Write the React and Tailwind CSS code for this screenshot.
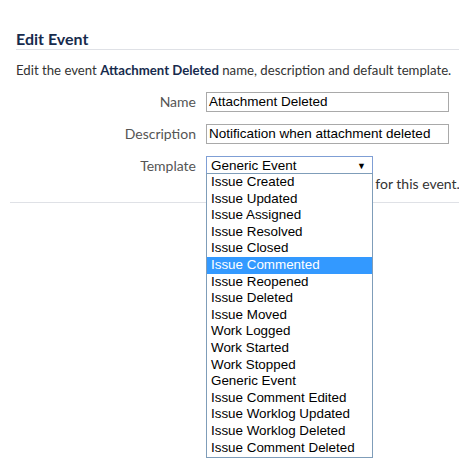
import React from "react";

const items = [
  "Issue Created",
  "Issue Updated",
  "Issue Assigned",
  "Issue Resolved",
  "Issue Closed",
  "Issue Commented",
  "Issue Reopened",
  "Issue Deleted",
  "Issue Moved",
  "Work Logged",
  "Work Started",
  "Work Stopped",
  "Generic Event",
  "Issue Comment Edited",
  "Issue Worklog Updated",
  "Issue Worklog Deleted",
  "Issue Comment Deleted",
];

const ui = { fontFamily: 'Lato, "Open Sans", sans-serif' };
const arial = { fontFamily: '"Liberation Sans", Arial, sans-serif' };

export default function App() {
  return (
    <div className="relative w-[459px] h-[467px] bg-white overflow-hidden text-[#333]" style={ui}>
      <div className="pt-[30px] pl-[16px]">
        <h2 className="text-[16px] leading-[18px] font-bold text-[#172b4d] pb-[1px] border-b border-[#dfe1e6]">
          Edit Event
        </h2>
        <p className="mt-[10px] text-[13.2px] leading-[20px] text-[#333] whitespace-nowrap">
          Edit the event <b className="font-bold text-[#172b4d]">Attachment Deleted</b> name, description and default template.
        </p>
      </div>
      <div className="mt-[11px] flex flex-col gap-[11px]">
        <div className="flex items-center">
          <label className="w-[206px] text-right pr-[10px] text-[14px] text-[#555]">Name</label>
          <div className="w-[243px] h-[20px] border border-[#a9a9a9] pl-[2px] text-[13.5px] leading-[18px] text-black whitespace-nowrap" style={arial}>
            Attachment Deleted
          </div>
        </div>
        <div className="flex items-center">
          <label className="w-[206px] text-right pr-[10px] text-[14px] text-[#555]">Description</label>
          <div className="w-[243px] h-[20px] border border-[#a9a9a9] pl-[2px] text-[13.5px] leading-[18px] text-black whitespace-nowrap" style={arial}>
            Notification when attachment deleted
          </div>
        </div>
        <div className="flex items-center">
          <label className="w-[206px] text-right pr-[10px] text-[14px] text-[#555]">Template</label>
          <div className="w-[167px] h-[20px] border border-[#7f9fd5] pl-[4px] pr-[6px] flex items-center justify-between text-[13.5px] leading-[18px] text-black" style={arial}>
            <span>Generic Event</span>
            <span className="text-[9px]">▼</span>
          </div>
        </div>
        <div className="pl-[206px] -mt-[12px] text-[14px] leading-[18px] text-[#333] whitespace-nowrap">
          Select the default template for this event.
        </div>
      </div>
      <div className="mt-[9px] ml-[10px] border-t border-[#dfe1e6]" />

      <div
        className="absolute left-[206px] top-[173px] w-[167px] h-[285px] bg-white border border-[#7f9db9] text-[13.4px] text-black"
        style={arial}
      >
        {items.map((it) => (
          <div
            key={it}
            className={
              "h-[16.6px] leading-[16.6px] pl-[4px] whitespace-nowrap " +
              (it === "Issue Commented" ? "bg-[#3399ff] text-white" : "")
            }
          >
            {it}
          </div>
        ))}
      </div>
    </div>
  );
}
